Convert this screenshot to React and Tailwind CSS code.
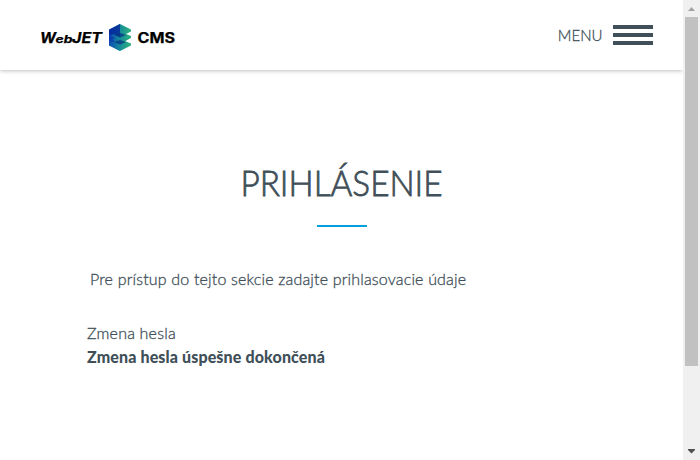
function Logo() {
  return (
    <svg className="block" width="136" height="30" viewBox="0 0 136 30" role="img" aria-label="WebJET CMS">
      <defs>
        <linearGradient id="layer" x1="0" x2="1">
          <stop offset="0" stopColor="#0a4bb4" />
          <stop offset="0.5" stopColor="#168c98" />
          <stop offset="1" stopColor="#2fb37c" />
        </linearGradient>
        <linearGradient id="side" x1="0" y1="0" x2="0" y2="1">
          <stop offset="0" stopColor="#04209a" />
          <stop offset="0.6" stopColor="#0a3fa6" />
          <stop offset="1" stopColor="#2b86cc" />
        </linearGradient>
      </defs>
      <g className="font-['Inter','Liberation_Sans',sans-serif] font-bold italic" fill="#000" stroke="#000" strokeWidth="0.25">
        <text x="0" y="20" fontSize="14.5" textLength="16" lengthAdjust="spacingAndGlyphs">W</text>
        <text x="15.5" y="20" fontSize="10" textLength="17" lengthAdjust="spacingAndGlyphs">eb</text>
        <text x="32" y="20" fontSize="14.5" textLength="30" lengthAdjust="spacingAndGlyphs">JET</text>
      </g>
      <path d="M69 7 80 1v27L69 22Z" fill="url(#side)" />
      <path d="m80 16 11 4.500v2L80 28l-11-5.500v-2Z" fill="url(#layer)" />
      <path d="m80 8.500 11 4.500v2L80 21l-11-6v-2Z" fill="url(#layer)" />
      <path d="m80 1 11 5.500v2L80 14 69 8.500v-2Z" fill="url(#layer)" />
      <path d="M69 7 80 1v13l-11-5Z" fill="#04209a" opacity="0.75" />
      <path d="m80 10 6 2-6 2.500-6-2.500ZM80 17l6 2-6 2.500-6-2.500Z" fill="#063a86" opacity="0.8" />
      <path d="m69 12 6 3-6 3Z" fill="#0b3eab" />
      <text x="97.500" y="20" className="font-['Inter','Liberation_Sans',sans-serif] font-bold" fontSize="14" textLength="37.500" lengthAdjust="spacingAndGlyphs" fill="#000" stroke="#000" strokeWidth="0.25">CMS</text>
    </svg>
  );
}

function Scrollbar() {
  return (
    <div className="flex w-[17px] shrink-0 flex-col items-center bg-[#f0f0f0]">
      <svg className="h-[17px] w-[17px] shrink-0" viewBox="0 0 17 17">
        <path d="m8.5 7 3.5 4H5Z" fill="#a3a3a3" />
      </svg>
      <div className="h-[349px] w-[13px] bg-[#c1c1c1]" />
      <div className="grow" />
      <svg className="h-[17px] w-[17px] shrink-0" viewBox="0 0 17 17">
        <path d="M5 6h7v1l-3.5 3.500L5 7Z" fill="#505050" />
      </svg>
    </div>
  );
}

export default function App() {
  return (
    <div className="flex h-[460px] w-[700px] overflow-hidden bg-white font-['Lato','Open_Sans',sans-serif] text-[#404f58]">
      <div className="flex w-[683px] flex-col overflow-hidden">
        <header className="flex h-[70px] shrink-0 items-center justify-between bg-white pr-[30px] pl-10 shadow-[0_0_5px_rgba(0,0,0,0.35)]">
          <div className="pt-[6px]"><Logo /></div>
          <button className="flex items-center gap-[10px]">
            <span className="origin-right scale-x-[0.94] text-base leading-6 font-light [-webkit-text-stroke:0.3px_#404f58]">MENU</span>
            <span className="flex w-10 flex-col gap-1">
              <span className="h-1 bg-[#404f58]" />
              <span className="h-1 bg-[#404f58]" />
              <span className="h-1 bg-[#404f58]" />
            </span>
          </button>
        </header>
        <main className="flex flex-col px-[87px] pt-[88px] text-base leading-6">
          <h1 className="scale-x-[0.925] text-center text-[36px] leading-[48px] font-light whitespace-nowrap [-webkit-text-stroke:0.8px_#404f58]">PRIHLÁSENIE</h1>
          <div className="mx-auto mt-[19px] h-[2px] w-[50px] bg-[#00a0df]" />
          <p className="mt-10 pl-[3px] font-light tracking-[0.17px] whitespace-nowrap [-webkit-text-stroke:0.3px_#404f58]">Pre prístup do tejto sekcie zadajte prihlasovacie údaje</p>
          <p className="mt-[30px] font-light tracking-[0.2px] [-webkit-text-stroke:0.3px_#404f58]">Zmena hesla</p>
          <p className="font-black tracking-[0.13px] whitespace-nowrap">Zmena hesla úspešne dokončená</p>
        </main>
      </div>
      <Scrollbar />
    </div>
  );
}
